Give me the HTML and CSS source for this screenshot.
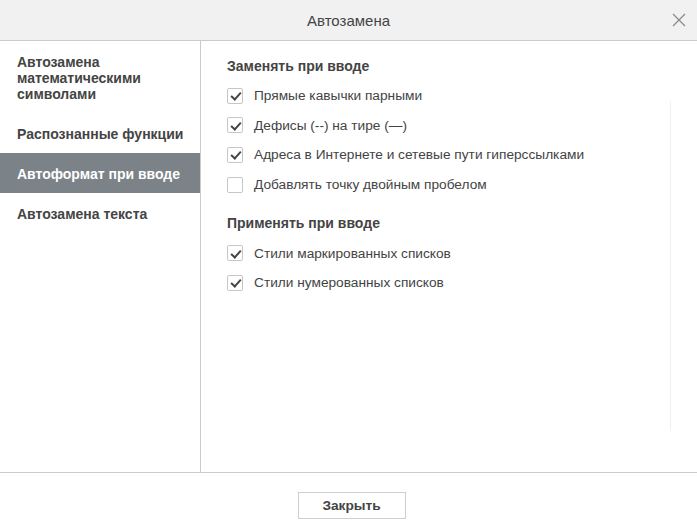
FILE: index.html
```html
<!DOCTYPE html>
<html lang="ru">
<head>
<meta charset="utf-8">
<title>Автозамена</title>
<link rel="stylesheet" href="styles.css">
</head>
<body>
<div class="dialog">
  <header class="titlebar">
    <span class="title">Автозамена</span>
    <button class="close" aria-label="Закрыть">
      <svg width="14" height="14" viewBox="0 0 14 14"><path d="M1 1L13 13M13 1L1 13" stroke="#8a8a8a" stroke-width="1.3" fill="none"/></svg>
    </button>
  </header>
  <div class="body">
    <nav class="sidebar">
      <div class="item">Автозамена математическими символами</div>
      <div class="item">Распознанные функции</div>
      <div class="item active">Автоформат при вводе</div>
      <div class="item">Автозамена текста</div>
    </nav>
    <main class="content">
      <div class="section-title">Заменять при вводе</div>
      <label class="row"><span class="cb checked"></span><span>Прямые кавычки парными</span></label>
      <label class="row"><span class="cb checked"></span><span>Дефисы (--) на тире (—)</span></label>
      <label class="row"><span class="cb checked"></span><span>Адреса в Интернете и сетевые пути гиперссылками</span></label>
      <label class="row"><span class="cb"></span><span>Добавлять точку двойным пробелом</span></label>
      <div class="section-title second">Применять при вводе</div>
      <label class="row"><span class="cb checked"></span><span>Стили маркированных списков</span></label>
      <label class="row"><span class="cb checked"></span><span>Стили нумерованных списков</span></label>
      <div class="track"></div>
    </main>
  </div>
  <footer class="footer">
    <button class="btn">Закрыть</button>
  </footer>
</div>
</body>
</html>
```
FILE: styles.css
```css
* { box-sizing: border-box; }
html, body { margin: 0; padding: 0; }
body {
  font-family: "Liberation Sans", Arial, sans-serif;
  color: #444;
  background: #fff;
  width: 697px;
  height: 527px;
  overflow: hidden;
}
.dialog {
  display: flex;
  flex-direction: column;
  height: 527px;
}
.titlebar {
  position: relative;
  height: 41px;
  background: #f1f1f1;
  border-bottom: 1px solid #cbcbcb;
  display: flex;
  align-items: center;
  justify-content: center;
}
.title {
  font-size: 15px;
  color: #444;
}
.close {
  position: absolute;
  right: 11px;
  top: 13px;
  width: 14px;
  height: 14px;
  padding: 0;
  border: 0;
  background: none;
  display: flex;
}
.body {
  display: flex;
  height: 432px;
  border-bottom: 1px solid #cbcbcb;
}
.sidebar {
  width: 201px;
  border-right: 1px solid #cbcbcb;
  flex-shrink: 0;
}
.item {
  padding: 13px 6px 11px 17px;
  font-size: 14px;
  line-height: 16px;
  font-weight: bold;
  color: #444;
}
.item.active {
  background: #7b8388;
  color: #fff;
}
.content {
  position: relative;
  flex: 1;
  padding: 10px 26px 0 26px;
}
.section-title {
  font-size: 14px;
  font-weight: bold;
  line-height: 30px;
  color: #444;
}
.section-title.second {
  margin-top: 9px;
}
.row {
  display: flex;
  align-items: center;
  height: 29.6px;
  font-size: 13.7px;
  color: #444;
}
.cb {
  width: 16px;
  height: 16px;
  border: 1px solid #c6c6c6;
  border-radius: 2px;
  margin-right: 11px;
  flex-shrink: 0;
  position: relative;
  background: #fff;
}
.cb.checked::after {
  content: "";
  position: absolute;
  left: 3px;
  top: 3.5px;
  width: 8px;
  height: 4px;
  border-left: 2px solid #444;
  border-bottom: 2px solid #444;
  transform: rotate(-48deg);
}
.track {
  position: absolute;
  left: 469px;
  top: 60px;
  width: 1px;
  height: 330px;
  background: #f0f0f0;
}
.footer {
  flex: 1;
  display: flex;
  justify-content: center;
  align-items: flex-start;
  padding-top: 19px;
  padding-left: 6px;
}
.btn {
  width: 108px;
  height: 27px;
  background: #fff;
  border: 1px solid #cfcfcf;
  font-family: "Liberation Sans", Arial, sans-serif;
  font-size: 13.7px;
  font-weight: bold;
  color: #444;
  padding: 0;
}
```
